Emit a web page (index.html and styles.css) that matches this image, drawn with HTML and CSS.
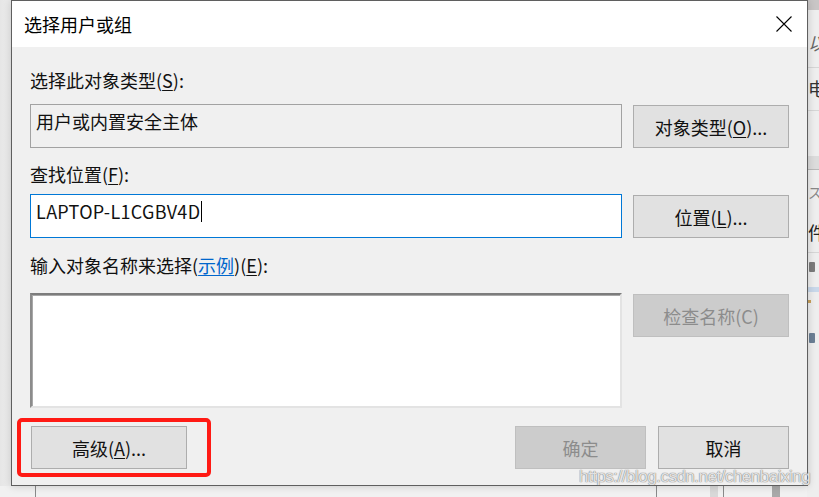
FILE: index.html
```html
<!DOCTYPE html>
<html lang="zh-CN">
<head>
<meta charset="utf-8">
<title>选择用户或组</title>
<link rel="stylesheet" href="styles.css">
</head>
<body>
<div class="desktop">
  <div class="bg-right">
    <div class="frag f-top"></div>
    <div class="frag f1">以a</div>
    <div class="hline h1"></div>
    <div class="frag f2">电</div>
    <div class="hline h2"></div>
    <div class="gbar"></div>
    <div class="frag f3">ス</div>
    <div class="frag f4">件</div>
    <div class="hline h3"></div>
    <div class="ico i1"></div>
    <div class="bline"></div>
    <div class="dot"></div>
    <div class="ico i2"></div>
  </div>
  <div class="bg-bottom">
    <div class="vl v1"></div>
    <div class="vl v2"></div>
    <div class="vbar v3"></div>
    <div class="vl v4"></div>
    <div class="vbar v5"></div>
  </div>

  <div class="dialog">
    <div class="titlebar">
      <span class="title">选择用户或组</span>
      <span class="close" aria-label="关闭">
        <svg width="16" height="16" viewBox="0 0 16 16"><path d="M0.5 0.5 L15.5 15.5 M15.5 0.5 L0.5 15.5" stroke="#000" stroke-width="1.1" fill="none"/></svg>
      </span>
    </div>
    <div class="content">
      <div class="label l1">选择此对象类型(<u>S</u>):</div>
      <div class="row r1">
        <div class="field readonly">用户或内置安全主体</div>
        <button class="btn">对象类型(<u>O</u>)...</button>
      </div>
      <div class="label l2">查找位置(<u>F</u>):</div>
      <div class="row r2">
        <div class="field focused"><span class="latin">LAPTOP-L1CGBV4D</span><span class="caret"></span></div>
        <button class="btn">位置(<u>L</u>)...</button>
      </div>
      <div class="label l3">输入对象名称来选择(<a class="link">示例</a>)(<u>E</u>):</div>
      <div class="row r3">
        <div class="textarea"></div>
        <button class="btn disabled">检查名称(C)</button>
      </div>
      <div class="footer">
        <div class="adv-wrap">
          <button class="btn adv">高级(<u>A</u>)...</button>
          <div class="highlight"></div>
        </div>
        <div class="spacer"></div>
        <button class="btn disabled ok">确定</button>
        <button class="btn cancel">取消</button>
      </div>
    </div>
  </div>

  <div class="watermark">https://blog.csdn.net/chenbaixing</div>
</div>
</body>
</html>
```

FILE: styles.css
```css
* { box-sizing: border-box; }
html, body { margin: 0; padding: 0; }
body {
  font-family: "Noto Sans CJK SC", "Noto Sans", sans-serif;
  background: #efefef;
}
.desktop {
  position: relative;
  width: 819px;
  height: 497px;
  overflow: hidden;
  background: linear-gradient(to right, #e6e6e6 0, #ededed 11px, #efefef 11px);
}

/* background window fragments */
.bg-right {
  position: absolute;
  left: 807px; top: 0;
  width: 12px; height: 497px;
  background: #eeeeee;
  overflow: hidden;
}
.frag { position: absolute; left: 1px; color: #555; font-size: 18px; line-height: 20px; white-space: nowrap; }
.f-top { top: 0; left: 0; width: 12px; height: 10px; background: #c9c6c6; }
.f1 { top: 32px; font-style: italic; color: #666; }
.f2 { top: 78px; color: #333; }
.f3 { top: 182px; font-size: 14px; color: #888; }
.f4 { top: 222px; color: #222; }
.hline { position: absolute; left: 0; width: 12px; height: 1px; background: #d6d6d6; }
.h1 { top: 67px; }
.h2 { top: 110px; }
.gbar { position: absolute; left: 0; top: 156px; width: 12px; height: 14px; background: #dcdcdc; border-bottom: 1px solid #b9b9b9; }
.h3 { top: 252px; }
.ico { position: absolute; left: 2px; width: 6px; height: 10px; border-radius: 1px; background: #7b7b7b; }
.i1 { top: 262px; }
.bline { position: absolute; left: 0; top: 287px; width: 12px; height: 5px; background: #c9d8ea; }
.dot { position: absolute; left: 1px; top: 300px; width: 3px; height: 3px; background: #c9a15a; }
.i2 { top: 333px; background: #6b7f95; }

.bg-bottom {
  position: absolute;
  left: 0; top: 486px;
  width: 807px; height: 11px;
  background: #f1f1f1;
}
.vl { position: absolute; top: 0; width: 1px; height: 11px; background: #8a8a8a; }
.v1 { left: 35px; }
.v2 { left: 656px; }
.vbar { position: absolute; top: 0; width: 8px; height: 11px; background: #d8d8d8; }
.v3 { left: 710px; }
.v4 { left: 723px; }
.vbar.v5 { left: 772px; background: #a9a9a9; }

/* dialog */
.dialog {
  position: absolute;
  left: 11px; top: 0;
  width: 797px; height: 486px;
  border: 1px solid #5f5f5f;
  background: #f0f0f0;
  box-shadow: 0 0 8px rgba(0,0,0,0.18);
  display: flex;
  flex-direction: column;
}
.titlebar {
  height: 46px;
  flex: none;
  background: #ffffff;
  display: flex;
  align-items: center;
  padding-left: 12px;
  padding-right: 15px;
}
.title {
  font-size: 18px;
  color: #000;
  flex: 1;
  line-height: 24px;
}
.close {
  width: 16px; height: 16px;
  display: flex;
}
.close svg { display: block; }

.content {
  padding: 0 18px 0 18px;
  display: flex;
  flex-direction: column;
  color: #000;
}
.label {
  font-size: 18px;
  line-height: 24px;
  white-space: nowrap;
  color: #111;
}
.label u, .btn u { text-decoration: underline; text-underline-offset: 2px; text-decoration-thickness: 1px; }
.l1 { margin-top: 21px; }
.l2 { margin-top: 14px; }
.l3 { margin-top: 15px; }
.link { color: #0066cc; text-decoration: underline; text-underline-offset: 2px; }

.row {
  display: grid;
  grid-template-columns: 1fr 156px;
  column-gap: 11px;
  align-items: start;
}
.r1 { margin-top: 12px; }
.r2 { margin-top: 8px; }
.r3 { margin-top: 16px; }

.field {
  height: 44px;
  border: 1px solid #a9a9a9;
  padding: 4px 5px 0 5px;
  font-size: 18px;
  line-height: 24px;
  white-space: nowrap;
  display: flex;
  align-items: flex-start;
  color: #111;
}
.latin { letter-spacing: 0.3px; }
.readonly { background: #f0f0f0; border-color: #a2a2a2; }
.focused { background: #ffffff; border-color: #0078d7; }
.caret {
  display: inline-block;
  width: 1px;
  height: 21px;
  margin-top: 2px;
  margin-left: 1px;
  background: #000;
}

.textarea {
  height: 115px;
  background: #ffffff;
  border-top: 2px solid #7c7c7c;
  border-left: 2px solid #8c8c8c;
  border-right: 2px solid #e3e3e3;
  border-bottom: 2px solid #e3e3e3;
  box-shadow: inset 1px 1px 0 #a8a8a8;
}

.btn {
  font-family: inherit;
  font-size: 18px;
  line-height: 24px;
  color: #111;
  height: 43px;
  background: #e1e1e1;
  border: 1px solid #adadad;
  padding: 0;
  margin: 0;
  white-space: nowrap;
  display: flex;
  align-items: center;
  justify-content: center;
}
.row .btn { margin-top: 1px; }
.btn.disabled {
  background: #cccccc;
  border-color: #bfbfbf;
  color: #8c8c8c;
}

.footer {
  margin-top: 18px;
  display: flex;
  align-items: center;
}
.adv-wrap { position: relative; margin-left: 1px; }
.btn.adv { width: 156px; }
.highlight {
  position: absolute;
  left: -14px; top: -8px;
  width: 194px; height: 59px;
  border: 4px solid #ff1a14;
  border-radius: 5px;
  pointer-events: none;
}
.spacer { flex: 1; }
.btn.ok { width: 131px; margin-right: 12px; }
.btn.cancel { width: 131px; }

.watermark {
  position: absolute;
  left: 579px; top: 466px;
  width: 232px;
  overflow: hidden;
  font-family: "Liberation Sans", Arial, sans-serif;
  font-size: 17px;
  line-height: 22px;
  color: rgba(255,255,255,0.8);
  text-shadow: 0 0 1px #7a7a7a, 0 0 1px #7a7a7a;
  white-space: nowrap;
  letter-spacing: -0.5px;
}
```
